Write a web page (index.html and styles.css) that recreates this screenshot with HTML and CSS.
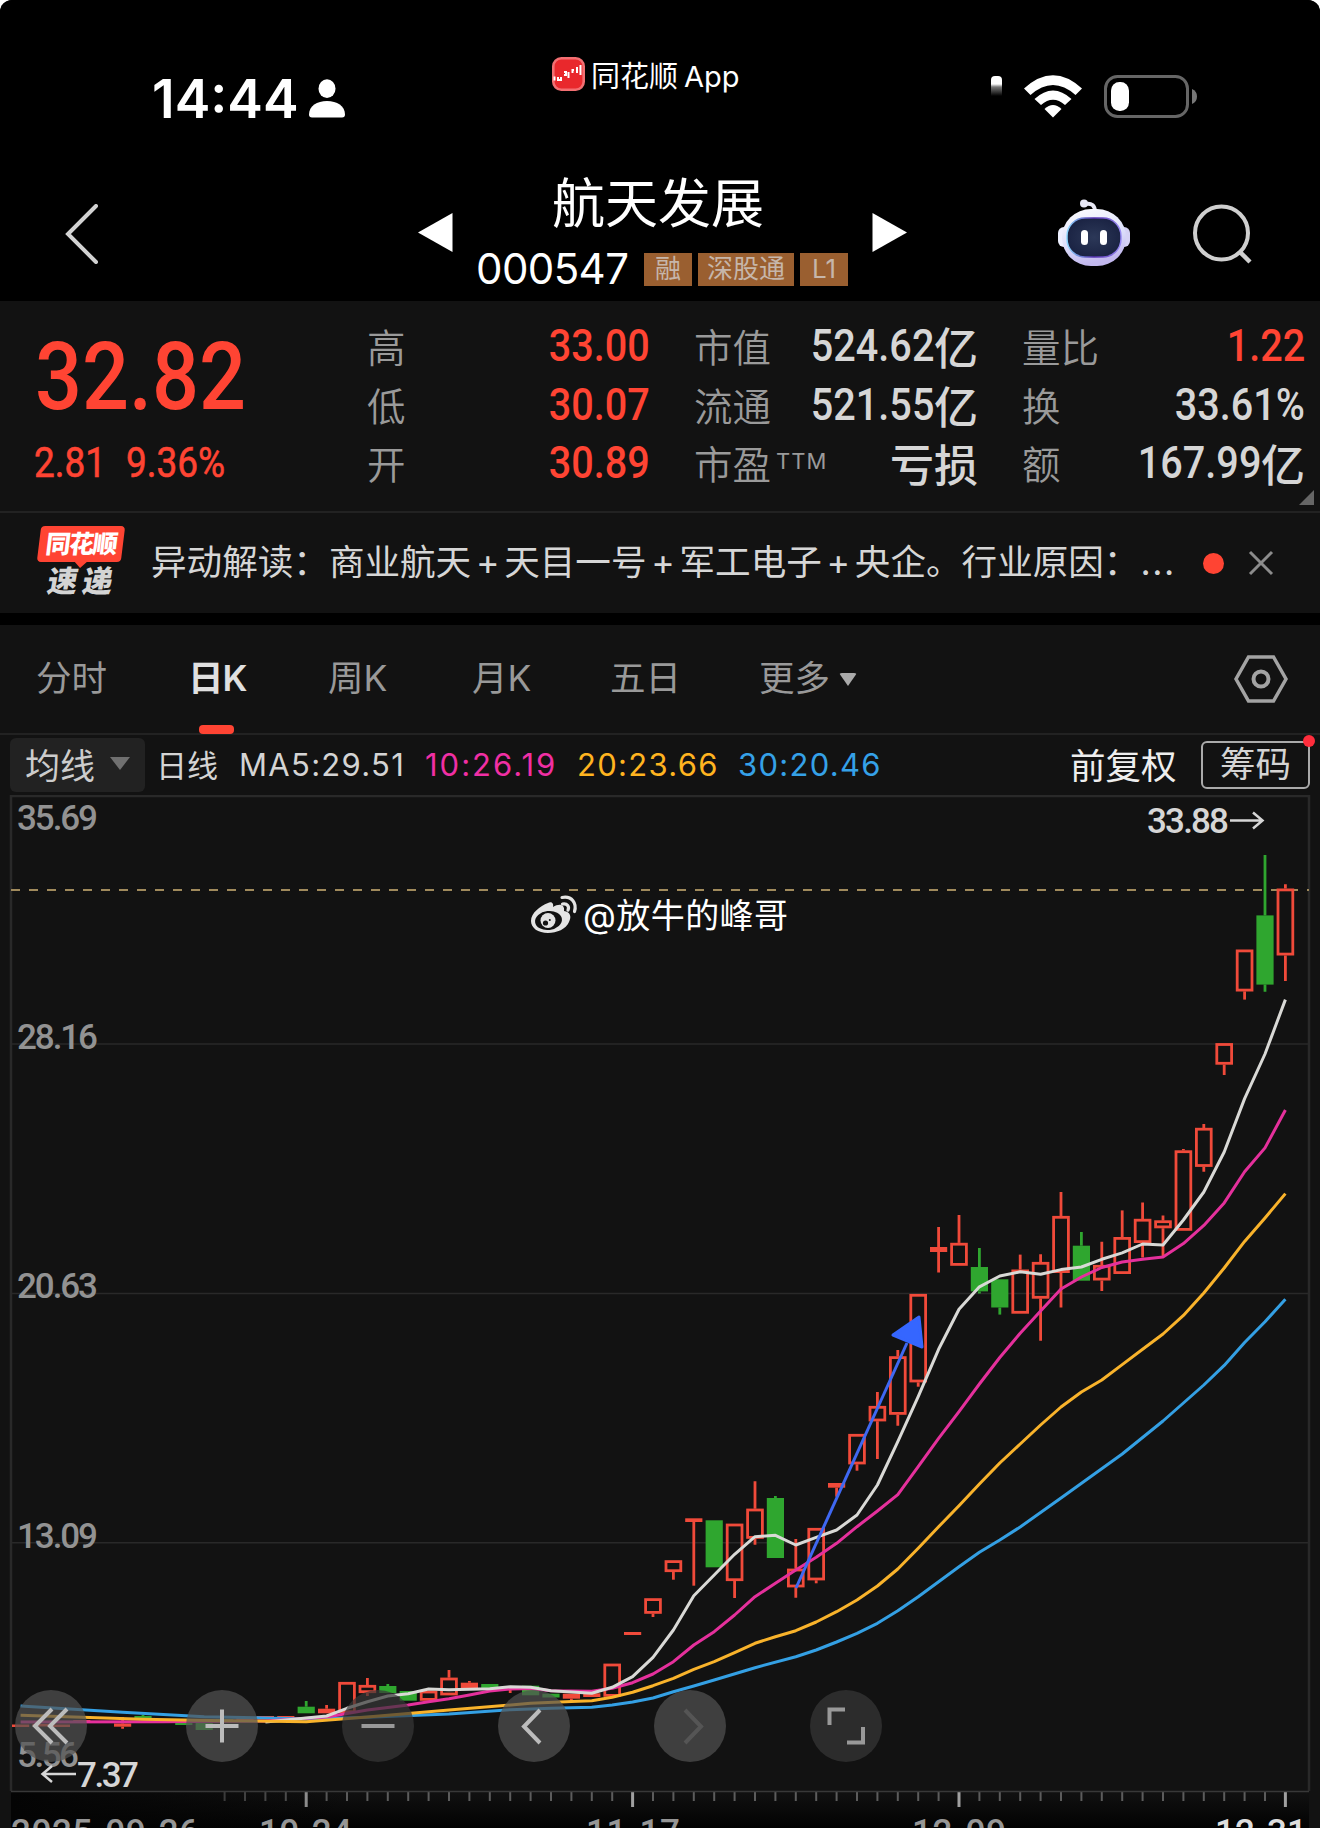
FILE: index.html
```html
<!DOCTYPE html>
<html lang="zh-CN">
<head>
<meta charset="utf-8">
<title>航天发展 000547</title>
<link rel="stylesheet" href="styles.css">
</head>
<body>
<div class="app">
  <header class="top">
    <div class="status">
      <div class="clock">
        <span class="fit time">14:44</span>
        <svg width="36" height="39" viewBox="0 0 36 39" fill="#fff"><ellipse cx="18" cy="9.700" rx="8.500" ry="9.400"/><path d="M3 38.500Q0 38.500 0 35.500C0 27 8 22 18 22S36 27 36 35.500Q36 38.500 33 38.500Z"/></svg>
      </div>
      <div class="source">
        <svg width="33" height="34" viewBox="0 0 33 34"><rect x="1.300" y="1.300" width="30.400" height="31.400" rx="8" fill="#e9282c" stroke="#f36f72" stroke-width="2.600"/><path d="M2.500 19.500v4M6 20v3h3v-3M12 15h2v3h-2M16.500 15v6M22 13h-1.500v3M25 10v6M28.500 8v10" fill="none" stroke="#fff" stroke-width="2"/></svg>
        <span>同花顺<i>App</i></span>
      </div>
      <div class="indicators">
        <i class="signal"></i>
        <svg width="58" height="43" viewBox="0 0 58 43" fill="#fff"><path d="M0 13.500Q29-13 58 13.500L51.500 20Q29 0 6.500 20Z"/><path d="M10.500 24Q29 7 47.500 24L41 30Q29 19.500 17 30Z"/><path d="M20.500 34Q29 26 37.500 34L29 42.500Z"/></svg>
        <svg width="93" height="43" viewBox="0 0 93 43"><rect x="1.500" y="1.500" width="82" height="40" rx="12" fill="none" stroke="#666" stroke-width="3"/><rect x="7" y="7" width="18" height="29" rx="8.500" fill="#fff"/><path d="M88 14q5 2 5 7.500t-5 7.500z" fill="#777"/></svg>
      </div>
    </div>
    <div class="nav">
      <svg class="back" width="34" height="60" viewBox="0 0 34 60"><path d="M31 2 3 30l28 28" fill="none" stroke="#d2d2d2" stroke-width="4" stroke-linecap="round"/></svg>
      <svg class="prev" width="35" height="39" viewBox="0 0 35 39"><path d="M34.500 0v39L0 19.500z" fill="#fff"/></svg>
      <div class="stock">
        <h1>航天发展</h1>
        <div class="code-row"><span class="code">000547</span><b class="tag t1">融</b><b class="tag t3">深股通</b><b class="tag t1">L1</b></div>
      </div>
      <svg class="next" width="35" height="39" viewBox="0 0 35 39"><path d="M.5 0v39L35 19.500z" fill="#fff"/></svg>
      <svg class="robot" width="72" height="68" viewBox="0 0 72 68">
        <defs><linearGradient id="shell" x1="0" y1="0" x2="0.300" y2="1"><stop offset="0" stop-color="#fff"/><stop offset=".6" stop-color="#dde0fb"/><stop offset="1" stop-color="#c2b8ee"/></linearGradient><radialGradient id="visor"><stop offset="0" stop-color="#2c3858"/><stop offset="1" stop-color="#1b2444"/></radialGradient><linearGradient id="rim"><stop offset="0" stop-color="#8cd8ff"/><stop offset=".5" stop-color="#5530b0"/><stop offset="1" stop-color="#9a8cf5"/></linearGradient></defs>
        <path d="M27 5q10-2 10 8" fill="none" stroke="#e8e8f5" stroke-width="4"/><circle cx="26" cy="4.500" r="4" fill="#e8e8f5"/>
        <rect x="0" y="28" width="12" height="20" rx="6" fill="#edf0ff"/><rect x="60" y="28" width="12" height="20" rx="6" fill="#d5d2f5"/>
        <rect x="4" y="10" width="64" height="57" rx="29" fill="url(#shell)"/><rect x="9" y="19" width="54" height="39" rx="18" fill="url(#visor)" stroke="url(#rim)" stroke-width="1.500"/><rect x="23" y="31" width="7" height="15" rx="3.500" fill="#fff"/><rect x="42" y="31" width="7" height="15" rx="3.500" fill="#fff"/>
      </svg>
      <svg class="search" width="62" height="62" viewBox="0 0 62 62" fill="none" stroke="#cfcfcf" stroke-width="4"><circle cx="29.500" cy="30" r="26.500"/><path d="m47 48 11 11" stroke-width="4.500"/></svg>
    </div>
  </header>

  <section class="quote">
    <div class="price">
      <div class="fit last">32.82</div>
      <div class="change"><span class="fit c1">2.81</span><span class="fit c2">9.36%</span></div>
    </div>
    <dl class="col a"><dt>高</dt><dd class="up"><span class="num">33.00</span></dd><dt>低</dt><dd class="up"><span class="num">30.07</span></dd><dt>开</dt><dd class="up"><span class="num">30.89</span></dd></dl>
    <dl class="col b"><dt>市值</dt><dd><span class="num">524.62</span>亿</dd><dt>流通</dt><dd><span class="num">521.55</span>亿</dd><dt>市盈<sup>TTM</sup></dt><dd>亏损</dd></dl>
    <dl class="col c"><dt>量比</dt><dd class="up"><span class="num">1.22</span></dd><dt>换</dt><dd><span class="num">33.61%</span></dd><dt>额</dt><dd><span class="num">167.99</span>亿</dd></dl>
    <i class="corner"></i>
  </section>

  <section class="news">
    <div class="badge"><span class="bubble">同花顺</span><span class="express">速递</span></div>
    <p>异动解读：商业航天<i>+</i>天目一号<i>+</i>军工电子<i>+</i>央企。行业原因：<em>...</em></p>
    <i class="dot"></i>
    <svg width="26" height="26" viewBox="0 0 26 26"><path d="m2 2 22 22M24 2 2 24" stroke="#8c8c8c" stroke-width="3"/></svg>
  </section>

  <nav class="tabs">
    <span class="w1">分时</span><span class="w2 on">日K</span><span class="w3">周K</span><span class="w4">月K</span><span class="w5">五日</span><span class="w6">更多<i></i></span>
    <svg width="54" height="48" viewBox="0 0 54 48" fill="none" stroke="#a3a3a3" stroke-width="3.500"><path d="M14.500 2h25L52 24 39.500 46h-25L2 24z"/><circle cx="27" cy="24" r="7.500" stroke-width="4"/></svg>
  </nav>

  <div class="ma">
    <span class="picker">均线<i></i></span>
    <span class="day">日线</span>
    <span class="v m5">MA5:29.51</span><span class="v m10">10:26.19</span><span class="v m20">20:23.66</span><span class="v m30">30:20.46</span>
    <span class="adjust">前复权</span><span class="chips">筹码<i></i></span>
  </div>

  <section class="chart">
    <svg id="kline" width="1320" height="1033" viewBox="0 795 1320 1033">
      <defs><linearGradient id="axis" x1="0" y1="0" x2="0" y2="1"><stop offset="0" stop-color="#111"/><stop offset="1" stop-color="#020202"/></linearGradient><linearGradient id="fade"><stop offset="0" stop-color="#040404"/><stop offset="1" stop-color="#040404" stop-opacity="0"/></linearGradient></defs>
      <rect x="11" y="1792" width="1298" height="36" fill="url(#axis)"/>
      <g id="ticks"></g>
      <rect x="11" y="1792" width="340" height="36" fill="url(#fade)"/>
      <g stroke="#292929" stroke-width="2"><path d="M11 1044H1309M11 1293.500H1309M11 1542.700H1309" stroke-width="1.500"/><path d="M11 1791V796H1309V1791" fill="none" stroke-width="2.500"/><path d="M11 1791.500H1309" stroke="#383838" stroke-width="1.500"/></g>
      <g class="scale">
        <text x="17" y="830" textLength="81">35.69</text><text x="17" y="1049" textLength="81">28.16</text><text x="17" y="1298" textLength="81">20.63</text><text x="17" y="1548" textLength="81">13.09</text><text x="17" y="1767" textLength="62">5.56</text>
      </g>
      <g class="dates"><text x="11" y="1844" textLength="188">2025-09-26</text><text x="259" y="1844" textLength="93">10-24</text><text x="586" y="1844" textLength="94">11-17</text><text x="912" y="1844" textLength="94">12-09</text><text class="cur" x="1215" y="1844" textLength="92">12-31</text></g>
      <path d="M11 890H1309" stroke="#a08a5c" stroke-width="1.800" stroke-dasharray="9 9"/>
      <g id="candles"></g>
      <g id="averages"></g>
      <g class="extreme"><text x="1147" y="833" textLength="82">33.88</text><text x="77" y="1787" textLength="62">7.37</text><path d="M1230 820.500h32m-9-8 9.500 8-9.500 8M76 1774H43m9-8-9.500 8 9.500 8"/></g>
      <g fill="#3566ff"><path d="M796 1588 907 1343" fill="none" stroke="#3f68f2" stroke-width="3"/><path d="m919 1317 3 30-29-12z" stroke="#3566ff" stroke-width="3" stroke-linejoin="round"/></g>
      <g class="weibo" transform="translate(531 894)">
        <path d="M17 9c3-2 6 0 5 4 6-4 12-3 11 4 6 1 8 5 5 11-3 7-12 11-21 11C7 39 0 34 0 27 0 19 9 12 17 9Z" fill="#e4e4e4"/><ellipse cx="17.500" cy="26.500" rx="13.500" ry="9.500" transform="rotate(-7 17.500 26.500)" fill="#121212"/><circle cx="17" cy="26.500" r="7.500" fill="#e4e4e4"/><circle cx="14.500" cy="29" r="2.600" fill="#121212"/><circle cx="18.800" cy="26" r="1" fill="#121212"/>
        <path d="M31 3.500c10-2 15 6 12.500 14M31.500 10c5-1 7 3 5.500 6" fill="none" stroke="#e4e4e4" stroke-width="3.200" stroke-linecap="round"/>
        <text x="52" y="34" textLength="205">@放牛的峰哥</text>
      </g>
    </svg>
    <div class="tools">
      <button><svg viewBox="0 0 72 72"><path d="M37 19 20 36l17 17M52 19 35 36l17 17"/></svg></button>
      <button><svg viewBox="0 0 72 72"><path d="M36 19.500v33M19.500 36h33"/></svg></button>
      <button class="dim"><svg viewBox="0 0 72 72"><path d="M19.500 36h33"/></svg></button>
      <button><svg viewBox="0 0 72 72"><path d="M42 20 26 36.500 42 53"/></svg></button>
      <button class="off"><svg viewBox="0 0 72 72"><path d="M31 20l16 16.500L31 53"/></svg></button>
      <button class="dim"><svg viewBox="0 0 72 72"><path d="M19.500 35V19.500H35M37 52.500h16V37"/></svg></button>
    </div>
  </section>
</div>
<script src="chart.js"></script>
</body>
</html>
```

FILE: styles.css
```css
* { box-sizing: border-box; }
body { margin: 0; background: #fff; }
i, em { font-style: normal; }
.app { width: 1320px; height: 1828px; overflow: hidden; background: #121212; color: #d4d4d4; border-radius: 12px 12px 0 0; font-family: Inter, "Noto Sans CJK SC", sans-serif; white-space: nowrap; }
.fit, .num { display: inline-block; font-family: Roboto, sans-serif; font-weight: 500; transform: scaleX(.88); transform-origin: left; }

.top { height: 301px; background: #000; color: #fff; }
.status { height: 150px; display: grid; grid-template-columns: 552px 439px 1fr; }
.clock { display: flex; align-items: flex-start; padding: 79px 0 0 152px; }
.time { font: 600 53px/40px Inter, sans-serif; width: 157px; transform: scaleX(1.01); }
.source { display: flex; align-items: center; gap: 6px; height: 36px; margin-top: 56px; font-size: 29px; }
.source i { margin-left: 6px; font-size: 29px; }
.indicators { display: flex; padding-top: 75px; }
.signal { width: 11px; height: 22px; margin: 1px 22px 0 0; border-radius: 4px 4px 0 0; background: linear-gradient(#fff 8px, #777 11px, transparent 20px); }
.indicators svg + svg { margin-left: 22px; }

.nav { height: 151px; display: flex; align-items: flex-start; }
.back { margin: 54px 0 0 65px; }
.prev { margin: 63px 0 0 319px; }
.stock { width: 419px; padding-left: 23px; }
h1 { margin: 20px 0 0 76px; font: 400 53px/60px "Noto Sans CJK SC", sans-serif; }
.code-row { display: flex; align-items: center; height: 34px; margin-top: 22px; }
.code { width: 168px; font-size: 42px; line-height: 34px; letter-spacing: -.6px; }
.tag { height: 33px; margin-right: 6px; background: #9a5f30; color: #c6b6aa; font: 400 26px/32px Inter, "Noto Sans CJK SC", sans-serif; text-align: center; }
.t1 { width: 48px; }
.t3 { width: 96px; }
.next { margin-top: 63px; }
.robot { margin: 49px 0 0 151px; }
.search { margin: 53px 0 0 62px; }

.quote { position: relative; height: 212px; display: flex; border-bottom: 2px solid #222; }
.price { width: 367px; color: #ff4433; }
.last { display: block; margin: 26px 0 0 35px; font-size: 94px; line-height: 100px; width: 236px; }
.change { display: flex; padding-left: 34px; margin-top: 15px; font-size: 42px; line-height: 42px; }
.c1 { width: 92px; }
.change .fit { font-weight: 400; -webkit-text-stroke: .6px #ff4433; }
.col { margin: 18px 0 0; display: grid; grid-template-columns: auto minmax(0, 1fr); grid-auto-rows: 58.500px; line-height: 58px; font-size: 38.500px; align-content: start; }
.col dt { color: #9a9a9a; font-weight: 350; }
.col dd { margin: 0; display: flex; justify-content: flex-end; font: 500 44px/54px "Noto Sans CJK SC", sans-serif; color: #d6d6d6; }
.num { font-size: 45px; line-height: 54px; transform-origin: right; }
.col .up { color: #ff4433; }
.a { width: 283px; }
.b { width: 284px; margin-left: 44px; }
.c { width: 283px; margin-left: 44px; }
.col sup { margin-left: 5px; font: 22px/20px Inter, sans-serif; letter-spacing: 1px; vertical-align: 10px; }
.corner { position: absolute; right: 6px; bottom: 6px; border-left: 15px solid transparent; border-bottom: 15px solid #666; }

.news { height: 112px; display: flex; align-items: center; border-bottom: 12px solid #000; }
.badge { width: 88px; height: 71px; margin: -3px 26px 0 37px; position: relative; display: flex; flex-direction: column; align-items: center; font-weight: 900; }
.bubble { position: relative; width: 84px; height: 37px; background: #ff4433; color: #fff; border-radius: 4px; transform: skewX(-7deg); font-size: 25px; line-height: 36px; text-align: center; letter-spacing: -1.500px; }
.bubble::after { content: ""; position: absolute; left: 36px; bottom: -6px; border: 8px solid transparent; border-bottom: 0; border-top-color: #ff4433; }
.express { margin-top: 2px; font-size: 30px; line-height: 34px; letter-spacing: 5px; text-indent: 3px; transform: skewX(-10deg); }
.news p { width: 1053px; margin: 0; font-size: 35.600px; line-height: 50px; color: #d6d6d6; }
.news p i { display: inline-block; width: 33px; text-align: center; }
.news em { margin-left: 1px; letter-spacing: 1.500px; }
.dot { width: 21px; height: 21px; border-radius: 50%; background: #ff4433; margin: 0 24px 0 -1px; }

.tabs { height: 110px; display: flex; align-items: center; border-bottom: 2px solid #222; padding-left: 36px; font-size: 35.500px; color: #999; }
.tabs span { position: relative; line-height: 110px; }
.w1 { width: 152px; }
.w2 { width: 140px; }
.w3 { width: 144px; }
.w4 { width: 138px; }
.w5 { width: 149px; }
.w6 { width: 475px; display: flex; align-items: center; gap: 9px; }
.w6 i { border: 9px solid transparent; border-top: 13px solid #aaa; border-bottom: 0; border-radius: 3px; }
.on { color: #e0e0e0; font-weight: 600; letter-spacing: -1px; }
.on::after { content: ""; position: absolute; left: 11px; bottom: 0; width: 35px; height: 9px; border-radius: 4px; background: #ff4433; }

.ma { height: 60px; display: flex; align-items: center; padding-left: 10px; }
.picker { width: 135px; height: 54px; padding: 0 0 3px 15px; display: flex; align-items: center; gap: 15px; background: #222; border-radius: 6px; font-size: 35px; color: #ccc; }
.picker i { border: 10px solid transparent; border-top: 13px solid #707070; border-bottom: 0; }
.day { width: 94px; padding: 0 0 3px 11px; font-size: 31px; }
.v { padding-bottom: 2px; font-size: 31px; letter-spacing: 1.300px; }
.m5 { width: 186px; }
.m10 { width: 152px; color: #f02fa4; letter-spacing: 2px; }
.m20 { width: 161px; color: #ffb420; }
.m30 { width: 332px; color: #35a1e8; }
.adjust { width: 131px; padding-bottom: 4px; font-size: 35.500px; color: #eee; }
.chips { position: relative; width: 109px; height: 48px; border: 2px solid #aaa; border-radius: 6px; font-size: 35.500px; line-height: 44px; text-align: center; }
.chips i { position: absolute; right: -7px; top: -8px; width: 12px; height: 12px; border-radius: 50%; background: #ff2d3c; }

.chart { position: relative; height: 1033px; }
.chart > svg { display: block; }
.chart text { font: 500 35px Roboto, sans-serif; }
.scale { fill: #929292; }
.dates { fill: #969696; }
.dates .cur { fill: #ddd; }
.extreme { fill: #d6d6d6; }
.extreme path { fill: none; stroke: #d6d6d6; stroke-width: 2.500; }
.weibo text { font: 400 34px Inter, "Noto Sans CJK SC", sans-serif; fill: #fff; }
.tools { position: absolute; left: 15px; top: 895px; display: flex; gap: 84px; }
.tools button { width: 72px; height: 72px; padding: 0; border: 0; border-radius: 50%; background: rgba(82,82,82,.7); }
.tools button:first-child { margin-right: 15px; }
.tools .dim { background: rgba(56,56,56,.7); }
.tools svg { display: block; fill: none; stroke: #bcbcbc; stroke-width: 4; }
.tools .off svg { stroke: #555; }
.tools .dim svg { stroke: #999; }
```

FILE: chart.js
```js
// Candles run from the newest to the oldest: [type, bodyTop, bodyBottom, high, low]
// r: hollow rise, s: flat rise drawn solid, g: fall
const candles = [
  ['r',888.6,955.4,884.3,981],['g',915.4,984.6,855,991.8],['r',949.6,991.4,949.6,999.6],['r',1043.2,1064.6,1043.2,1075],
  ['r',1127.9,1166.8,1123.9,1171.8],['r',1150.4,1230.7,1149,1230.7],['r',1220.4,1228.2,1215.4,1256.4],['r',1218.9,1242.9,1202.5,1257.5],
  ['r',1237.1,1273.9,1210.4,1273.9],['r',1265,1280.4,1241.8,1291],['g',1245.7,1280.7,1232,1280.7],['r',1216,1272.9,1192,1307.5],
  ['r',1262,1298.6,1254.3,1340.7],['r',1269.6,1313.6,1254.6,1313.6],['g',1279.3,1307.5,1279.3,1314.6],['g',1267,1291.4,1247.9,1293.6],
  ['r',1242.9,1265.7,1215,1265.7],['s',1247,1252,1227,1272.5],['r',1294,1382.3,1294,1386.7],['r',1356.3,1414.7,1350,1425.7],
  ['r',1406,1421.3,1392,1459],['r',1434,1464.3,1434,1470.7],['s',1483,1487.7,1483,1496.7],['r',1528,1580.3,1528,1583.3],
  ['r',1568.7,1587.3,1539,1597.7],['g',1498,1558,1496,1558],['r',1508.7,1538.7,1481.3,1544.7],['r',1523.7,1581,1523.7,1598],
  ['g',1520.3,1567.3,1520.3,1567.3],['s',1518.3,1522,1518.3,1585.7],['r',1560.3,1572,1560.3,1579.7],['r',1598.3,1613.7,1598.3,1617],
  ['s',1632,1635,1632,1635],['r',1663.7,1696.7,1663.7,1696.7],['s',1693.3,1697,1693.3,1697],['s',1693.7,1698.7,1693.7,1700.7],
  ['g',1693.7,1697.5,1693.7,1697.5],['g',1685.7,1695.3,1685.7,1695.3],['s',1687,1690,1687,1693],['g',1684,1690,1684,1690],
  ['s',1682.7,1688.7,1681,1688.7],['r',1677.7,1695.3,1670,1695.3],['r',1690.7,1700.7,1690.7,1700.7],['g',1691,1700.7,1691,1700.7],
  ['g',1686,1693,1684,1693],['r',1685,1693,1678,1696],['r',1682,1713,1682,1713],['s',1708.7,1713.3,1705,1713.3],
  ['g',1706.7,1713.3,1701,1713.3],['s',1716,1718,1716,1718],['s',1716,1718,1716,1718],['s',1717,1720,1717,1720],
  ['g',1719,1722,1719,1722],['g',1723,1730,1723,1730],['g',1721.5,1725,1721.5,1725],['s',1719,1721,1719,1721],
  ['g',1716,1718.5,1715,1718.5],['s',1723.5,1726.7,1717,1728.7],['s',1717,1719,1717,1719],['s',1720,1722,1720,1722],
  ['s',1724.5,1727,1724.5,1727],['s',1724,1726.5,1724,1726.5],['s',1724.5,1727,1724.5,1727]
];

// [index, y] points of each moving average
const averages = [
  ['#34a0e4', [0,1299.3,1,1321.8,2,1342.5,3,1365.4,4,1385,5,1403,6,1421,8,1454,11,1498,13,1527,14,1540,15,1552.3,16,1566.7,17,1581.7,18,1596.7,19,1610.7,20,1623.3,21,1633.3,22,1642,23,1650,24,1656.7,26,1667.7,28,1680,29,1686,30,1691.7,31,1698,32,1702,33,1705,34,1707.3,36,1708.3,38,1709.7,41,1714,45,1717.3,48,1719,53,1716.7,57,1712.3,62,1706]],
  ['#e5309c', [0,1110,1,1147.9,2,1171.8,3,1202.9,4,1225.4,5,1243.6,6,1257,7,1259.3,8,1262,9,1267.5,10,1277,11,1289,12,1311,13,1333.2,14,1357.5,15,1384,16,1411.7,17,1438.3,18,1466.7,19,1494.7,20,1511,21,1526.7,22,1543.3,23,1557.3,24,1570,25,1583.3,26,1596.7,27,1615,28,1631.7,29,1645,30,1661.7,31,1674,32,1682.7,33,1688.3,34,1691.3,36,1690.7,37,1688.5,38,1689,39,1691,40,1695,41,1698.7,42,1701.7,43,1705,45,1710,47,1717,50,1721,55,1721.7,62,1722]],
  ['#d9d9d6', [0,999.6,1,1054,2,1098.6,3,1152,4,1192,5,1220,6,1245,7,1244,8,1252.9,9,1259.3,10,1267,11,1269.6,12,1274.3,13,1271.8,14,1276,15,1286.8,16,1309.3,17,1349.3,18,1396.7,19,1441.7,20,1485,21,1515,22,1530,23,1537.3,24,1545,25,1535.3,26,1536.7,27,1554.3,28,1575,29,1595.7,30,1630,31,1657.3,32,1676.7,33,1687.3,34,1693.3,35,1692,36,1690.7,37,1687.3,38,1686.7,39,1688.7,41,1689.7,42,1689,43,1693.7,44,1696,45,1701.7,46,1708.3,47,1716,48,1718,50,1722]],
  ['#f9b32b', [0,1193.6,1,1218,2,1241.4,3,1268,4,1293,5,1315.4,6,1334,7,1349.3,8,1364.6,9,1380,10,1392,11,1407,12,1425,13,1444,14,1463,15,1484,16,1505.7,17,1526.7,18,1548.3,19,1569,20,1586,21,1600,22,1611.7,23,1622,24,1630.7,25,1636.7,26,1643.3,27,1652.7,28,1661.7,29,1669.3,30,1678.3,31,1685.7,32,1692.3,33,1697.3,34,1700.7,35,1701.5,37,1703.3,41,1710,45,1717,48,1721.7,52,1720.7,56,1719.3,62,1715.3]]
];

const x = k => 1285.4 - 20.4 * k;
const red = '#f04a3a', green = '#2fa62f';

document.getElementById('candles').innerHTML = candles.map(([type, top, bottom, high, low], k) => {
  const c = type === 'g' ? green : red, cx = x(k).toFixed(1);
  const wick = `<path d="M${cx} ${high}V${top}M${cx} ${bottom}V${low}" stroke="${c}" stroke-width="2.800"/>`;
  return wick + (type === 'r'
    ? `<rect x="${(cx - 7.4).toFixed(1)}" y="${top + 1.3}" width="14.800" height="${(bottom - top - 2.6).toFixed(1)}" fill="none" stroke="${c}" stroke-width="2.800"/>`
    : `<rect x="${(cx - 8.6).toFixed(1)}" y="${top}" width="17.200" height="${(bottom - top).toFixed(1)}" fill="${c}"/>`);
}).join('');

document.getElementById('averages').innerHTML = averages.map(([color, p]) => {
  let d = '';
  for (let i = 0; i < p.length; i += 2) d += (i ? 'L' : 'M') + x(p[i]).toFixed(1) + ' ' + p[i + 1];
  return `<path d="${d}" fill="none" stroke="${color}" stroke-width="3" stroke-linejoin="round"/>`;
}).join('');

document.getElementById('ticks').innerHTML = Array.from({ length: 53 }, (_, k) => {
  const major = k % 16 === 0;
  return `<path d="M${x(k).toFixed(1)} 1792V${major ? 1807 : 1801}" stroke="${major ? '#a0a0a0' : '#5c5c5c'}" stroke-width="${major ? 3 : 2}"/>`;
}).join('');
```
